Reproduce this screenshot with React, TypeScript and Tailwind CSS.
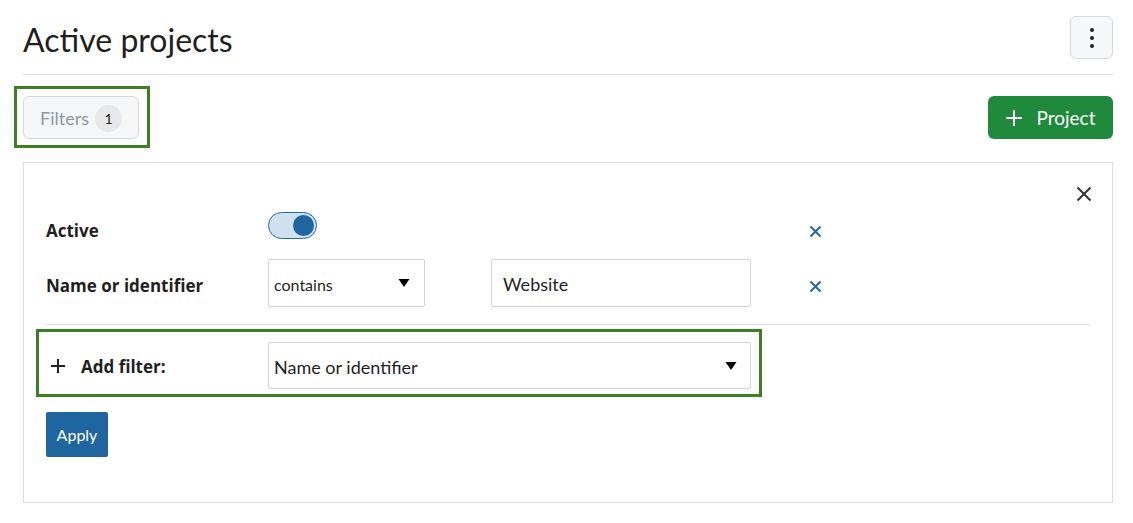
import { useState } from "react";

function Caret() {
  return (
    <svg width="12" height="10" viewBox="0 0 12 10" className="-mt-[3px] shrink-0">
      <path d="M0.5 1 L11.5 1 L6 9 Z" fill="#000" />
    </svg>
  );
}

function SmallX({ className = "" }: { className?: string }) {
  return (
    <svg width="13" height="13" viewBox="0 0 13 13" className={className}>
      <path d="M1.5 1.5 L11.5 11.5 M11.5 1.5 L1.5 11.5" stroke="currentColor" strokeWidth="2" />
    </svg>
  );
}

const labelFont = { fontFamily: "'Open Sans', Lato, sans-serif" };

export default function App() {
  const [active, setActive] = useState(true);

  return (
    <div
      className="min-h-[523px] bg-white pl-[23px] pr-[20px] pt-4 text-[#1f1f1f]"
      style={{ fontFamily: "Lato, 'Noto Sans', sans-serif" }}
    >
      {/* Header */}
      <header className="flex items-center justify-between border-b border-[#d9dce3] pb-[15px]">
        <h1 className="pt-[4px] text-[32px] leading-[39px] font-normal">Active projects</h1>
        <button
          type="button"
          className="flex h-[43px] w-[43px] flex-col items-center justify-center gap-[4px] rounded-md border border-[#d5d9df] bg-[#f6f7f9]"
        >
          <span className="h-[4px] w-[4px] rounded-full bg-[#222]" />
          <span className="h-[4px] w-[4px] rounded-full bg-[#222]" />
          <span className="h-[4px] w-[4px] rounded-full bg-[#222]" />
        </button>
      </header>

      {/* Toolbar */}
      <div className="mt-[21px] flex items-center justify-between">
        <div className="-mb-[9px] -ml-[9px] -mt-[10px] border-[3px] border-[#3d7f22] pb-[6px] pl-[6px] pr-[8px] pt-[7px]">
          <button
            type="button"
            className="flex h-[43px] w-[116px] items-center justify-center gap-[6px] rounded-md border border-[#d5d9df] bg-[#f5f6f8] pt-[2px] text-[18px] text-[#8f97a3]"
          >
            Filters
            <span className="flex h-[27px] w-[27px] items-center justify-center rounded-full bg-[#e6e8ec] text-[14px] text-[#222]">1</span>
          </button>
        </div>
        <button
          type="button"
          className="flex h-[43px] w-[125px] items-center justify-center gap-[13px] rounded-md bg-[#208a3c] pt-[2px] text-[19px] text-white"
        >
          <svg width="18" height="18" viewBox="0 0 18 18" className="-mt-[2px]">
            <path d="M9 1 V17 M1 9 H17" stroke="#fff" strokeWidth="2" />
          </svg>
          Project
        </button>
      </div>

      {/* Filter panel */}
      <section className="mt-[23px] h-[341px] border border-[#d9dce3] px-[22px] pt-[22px]">
        <div className="-mr-[2px] flex h-[18px] items-center justify-end">
          <button type="button" className="text-[#333]">
            <svg width="16" height="16" viewBox="0 0 16 16">
              <path d="M1.5 1.5 L14.5 14.5 M14.5 1.5 L1.5 14.5" stroke="currentColor" strokeWidth="2" />
            </svg>
          </button>
        </div>

        <div className="mt-[9px] flex h-[36px] items-center">
          <span className="w-[222px] pt-[2px] text-[17px] font-bold" style={labelFont}>
            Active
          </span>
          <div className="flex w-[541px] items-center">
            <button
              type="button"
              onClick={() => setActive(!active)}
              className={`-mt-[10px] flex h-[27px] w-[49px] items-center rounded-full border border-[#1f6aa6] bg-[#cfe0ef] px-[2px] ${
                active ? "justify-end" : "justify-start"
              }`}
            >
              <span className="h-[21px] w-[21px] rounded-full bg-[#1f65a0]" />
            </button>
          </div>
          <SmallX className="mt-[2px] text-[#1f6aa6]" />
        </div>

        <div className="mt-[11px] flex items-center">
          <span className="w-[222px] pt-[5px] text-[17px] font-bold" style={labelFont}>
            Name or identifier
          </span>
          <div className="flex h-[48px] w-[157px] items-center justify-between rounded-[2px] border border-[#d0d5dc] pl-[5px] pr-[14px] pt-[3px] text-[16px]">
            contains
            <Caret />
          </div>
          <div className="ml-[66px] flex h-[48px] w-[260px] items-center rounded-[2px] border border-[#d0d5dc] px-[11px] pt-[3px] text-[18px]">
            Website
          </div>
          <SmallX className="ml-[58px] mt-[6px] text-[#1f6aa6]" />
        </div>

        <div className="mt-[17px] border-t border-[#d9dce3]" />

        <div className="-ml-[10px] mt-[4px] flex h-[68px] w-[726px] items-center border-[3px] border-[#3d7f22] pl-[10px] pt-[5px]">
          <svg width="16" height="16" viewBox="0 0 16 16" className="ml-[1px]">
            <path d="M8 1 V15 M1 8 H15" stroke="#222" strokeWidth="2" />
          </svg>
          <span className="ml-[15px] w-[187px] pt-[3px] text-[17px] font-bold" style={labelFont}>
            Add filter:
          </span>
          <div className="flex h-[47px] w-[483px] items-center justify-between rounded-[2px] border border-[#d0d5dc] pl-[5px] pr-[13px] pt-[3px] text-[18px]">
            Name or identifier
            <Caret />
          </div>
        </div>

        <button
          type="button"
          className="mt-[15px] flex h-[45px] w-[62px] items-center justify-center rounded-[2px] bg-[#1f65a0] text-[16px] text-white"
        >
          Apply
        </button>
      </section>
    </div>
  );
}
